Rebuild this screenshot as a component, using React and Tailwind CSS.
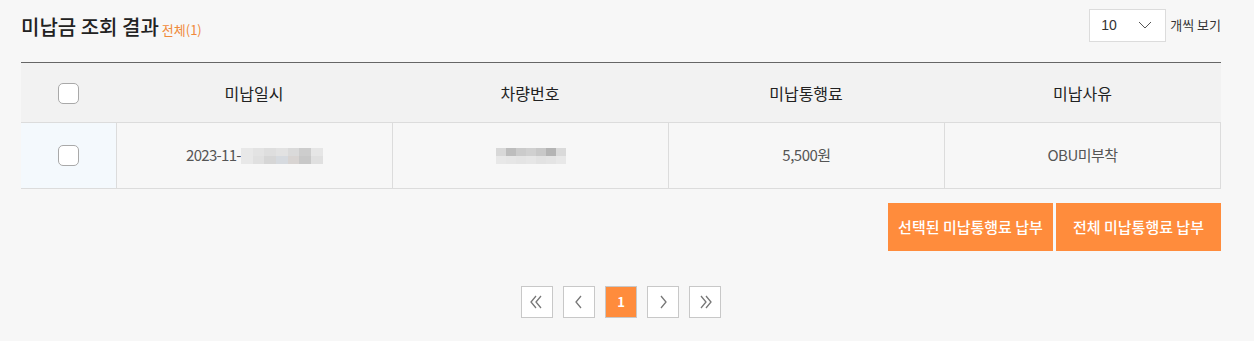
import React from "react";

const font = { fontFamily: '"Noto Sans CJK KR", "Noto Sans", sans-serif' };

function Checkbox() {
  return <span className="block w-[21px] h-[21px] rounded-[5px] border border-[#a9a9a9] bg-white" />;
}

function Blur({ w, cells }) {
  return (
    <span className="inline-flex flex-col" style={{ width: w }}>
      <span className="flex h-[8px]">
        {cells[0].map((c, i) => (
          <span key={i} className="flex-1" style={{ background: c }} />
        ))}
      </span>
      <span className="flex h-[8px]">
        {cells[1].map((c, i) => (
          <span key={i} className="flex-1" style={{ background: c }} />
        ))}
      </span>
    </span>
  );
}

function PageBtn({ children, active }) {
  return (
    <span
      className={
        "w-[32px] h-[32px] flex items-center justify-center border " +
        (active ? "bg-[#ff8c3c] border-[#c8c8c8] text-white font-bold text-[13px]" : "bg-white border-[#c8c8c8] text-[#777]")
      }
    >
      {children}
    </span>
  );
}

export default function App() {
  return (
    <div className="w-[1254px] h-[341px] bg-[#f7f7f7] text-[#222]" style={font}>
      <div className="pl-[21px] pr-[33px]">
        <div className="flex items-center justify-between h-[62px]">
          <div className="flex items-baseline pb-[8px]">
            <span className="text-[20px] font-medium text-[#222]">미납금 조회 결과</span>
            <span className="text-[13px] text-[#f08a3a] ml-[3px]">전체(1)</span>
          </div>
          <div className="flex items-center pb-[12px]">
            <div className="w-[77px] h-[33px] bg-white border border-[#dcdcdc] flex items-center pl-[11px] pr-[13px] justify-between">
              <span className="text-[14px] text-[#333]" style={{ fontFamily: '"Liberation Sans", sans-serif' }}>10</span>
              <svg width="14" height="8" viewBox="0 0 14 8" fill="none">
                <path d="M1 1 L7 7 L13 1" stroke="#555" strokeWidth="1" />
              </svg>
            </div>
            <span className="text-[13px] text-[#333] ml-[4px]">개씩 보기</span>
          </div>
        </div>

        <div className="border-t border-[#666] w-[1200px]">
          <div className="grid grid-cols-[95px_276px_276px_276px_277px] h-[59px] bg-[#f2f2f2] items-center text-[16px] text-[#222]">
            <div className="flex justify-center pt-[2px]">
              <Checkbox />
            </div>
            <div className="text-center">미납일시</div>
            <div className="text-center">차량번호</div>
            <div className="text-center">미납통행료</div>
            <div className="text-center">미납사유</div>
          </div>
          <div className="grid grid-cols-[95px_276px_276px_276px_277px] h-[67px] border-t border-b border-[#dcdcdc] text-[15px] text-[#555]">
            <div className="flex items-center justify-center bg-[#f4f9fd]">
              <Checkbox />
            </div>
            <div className="flex items-center justify-center border-l border-[#dcdcdc]">
              <span className="tracking-[-0.7px]">2023-11-</span>
              <Blur
                w="82px"
                cells={[
                  ["#e8e8e8", "#e3e3e3", "#dedede", "#e2e2e2", "#dadada", "#cdcdcd", "#e6e6e6"],
                  ["#e8e8e8", "#e0e0e0", "#d6d6d6", "#d6dadf", "#d8d4d2", "#c8c8c8", "#e0e0e0"],
                ]}
              />
            </div>
            <div className="flex items-center justify-center border-l border-[#dcdcdc]">
              <Blur
                w="70px"
                cells={[
                  ["#d8d8d8", "#bdbdbd", "#cbcbcb", "#d0d0d0", "#c8c8c8", "#b4b4b4", "#dadada"],
                  ["#e8e8e8", "#e6e6e6", "#e4e4e4", "#e6e6e6", "#e2e2e2", "#e4e4e4", "#e8e8e8"],
                ]}
              />
            </div>
            <div className="flex items-center justify-center border-l border-[#dcdcdc] tracking-[-0.5px]">5,500원</div>
            <div className="flex items-center justify-center border-l border-r border-[#dcdcdc] tracking-[-0.5px]">OBU미부착</div>
          </div>
        </div>

        <div className="flex justify-end gap-[3px] mt-[14px] w-[1200px]">
          <button className="w-[165px] h-[48px] bg-[#ff8c3c] text-white text-[15px] font-medium">선택된 미납통행료 납부</button>
          <button className="w-[165px] h-[48px] bg-[#ff8c3c] text-white text-[15px] font-medium">전체 미납통행료 납부</button>
        </div>

        <div className="flex justify-center gap-[10px] mt-[35px] w-[1200px]">
          <PageBtn>
            <svg width="16" height="14" viewBox="0 0 16 14" fill="none">
              <path d="M7 1 L2 7 L7 13 M12 1 L7 7 L12 13" stroke="#777" strokeWidth="1.3" />
            </svg>
          </PageBtn>
          <PageBtn>
            <svg width="10" height="14" viewBox="0 0 10 14" fill="none">
              <path d="M7 1 L2 7 L7 13" stroke="#777" strokeWidth="1.3" />
            </svg>
          </PageBtn>
          <PageBtn active>1</PageBtn>
          <PageBtn>
            <svg width="10" height="14" viewBox="0 0 10 14" fill="none">
              <path d="M3 1 L8 7 L3 13" stroke="#777" strokeWidth="1.3" />
            </svg>
          </PageBtn>
          <PageBtn>
            <svg width="16" height="14" viewBox="0 0 16 14" fill="none">
              <path d="M4 1 L9 7 L4 13 M9 1 L14 7 L9 13" stroke="#777" strokeWidth="1.3" />
            </svg>
          </PageBtn>
        </div>
      </div>
    </div>
  );
}
